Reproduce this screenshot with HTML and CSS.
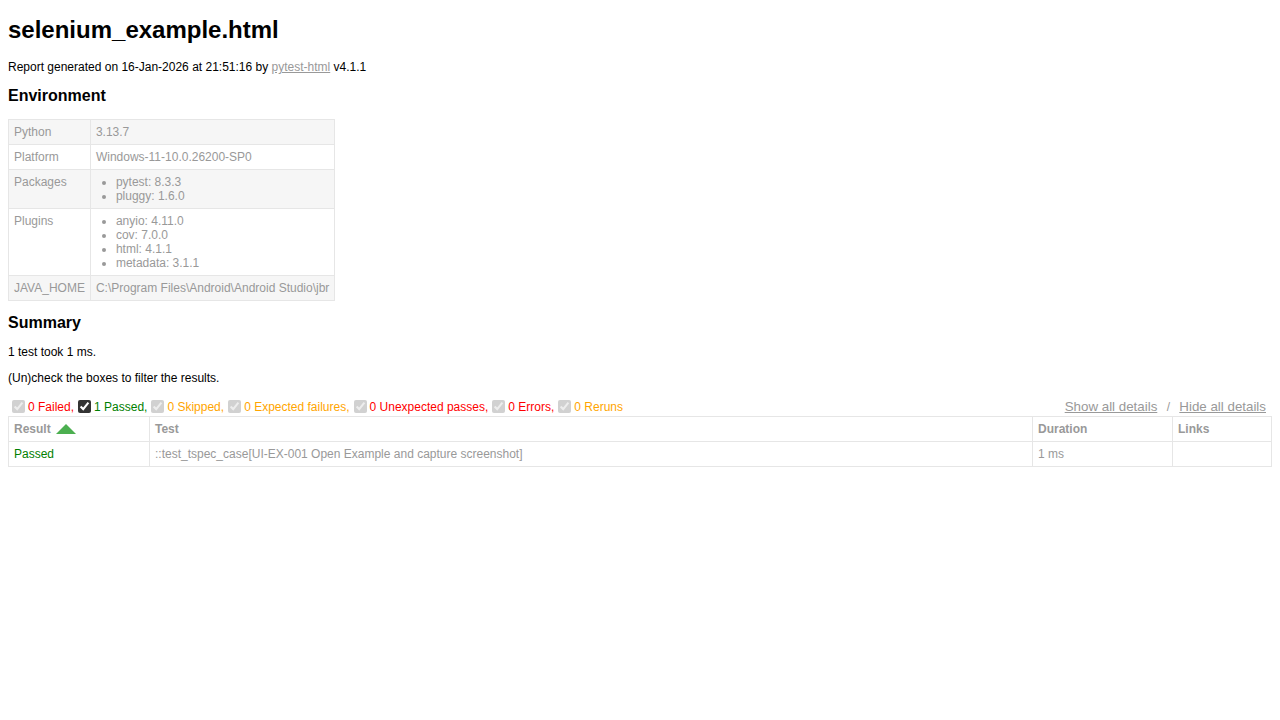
FILE: index.html
```html
<!DOCTYPE html>
<html lang="en">
<head>
    <meta charset="UTF-8">
    <title>selenium_example.html</title>
    <link rel="stylesheet" href="styles.css">
</head>
<body>
    <h1 id="title">selenium_example.html</h1>
    <p>Report generated on 16-Jan-2026 at 21:51:16 by <a href="#">pytest-html</a> v4.1.1</p>

    <div id="environment-header">
        <h2>Environment</h2>
    </div>
    <table id="environment">
        <tr>
            <td>Python</td>
            <td>3.13.7</td>
        </tr>
        <tr>
            <td>Platform</td>
            <td>Windows-11-10.0.26200-SP0</td>
        </tr>
        <tr>
            <td>Packages</td>
            <td>
                <ul>
                    <li>pytest: 8.3.3</li>
                    <li>pluggy: 1.6.0</li>
                </ul>
            </td>
        </tr>
        <tr>
            <td>Plugins</td>
            <td>
                <ul>
                    <li>anyio: 4.11.0</li>
                    <li>cov: 7.0.0</li>
                    <li>html: 4.1.1</li>
                    <li>metadata: 3.1.1</li>
                </ul>
            </td>
        </tr>
        <tr>
            <td>JAVA_HOME</td>
            <td>C:\Program Files\Android\Android Studio\jbr</td>
        </tr>
    </table>

    <div class="summary">
        <h2>Summary</h2>
        <p class="run-count">1 test took 1 ms.</p>
        <p class="filter">(Un)check the boxes to filter the results.</p>
        <div class="controls">
            <div class="filters"><input type="checkbox" checked disabled><span class="failed">0 Failed,</span> <input type="checkbox" class="active" checked><span class="passed">1 Passed,</span> <input type="checkbox" checked disabled><span class="skipped">0 Skipped,</span> <input type="checkbox" checked disabled><span class="xfailed">0 Expected failures,</span> <input type="checkbox" checked disabled><span class="xpassed">0 Unexpected passes,</span> <input type="checkbox" checked disabled><span class="error">0 Errors,</span> <input type="checkbox" checked disabled><span class="rerun">0 Reruns</span></div>
            <div class="collapse">
                <button id="show_all_details">Show all details</button>&nbsp;/&nbsp;<button id="hide_all_details">Hide all details</button>
            </div>
        </div>
    </div>

    <table id="results-table">
        <thead>
            <tr>
                <th class="sortable asc col-result">Result</th>
                <th class="col-testId">Test</th>
                <th class="col-duration">Duration</th>
                <th class="col-links">Links</th>
            </tr>
        </thead>
        <tbody>
            <tr>
                <td class="passed">Passed</td>
                <td>::test_tspec_case[UI-EX-001 Open Example and capture screenshot]</td>
                <td>1 ms</td>
                <td></td>
            </tr>
        </tbody>
    </table>
</body>
</html>
```

FILE: styles.css
```css
body {
    margin: 0 8px 8px;
    font-family: "Liberation Sans", Helvetica, Arial, sans-serif;
    font-size: 12px;
    min-width: 800px;
    color: #999;
}

h1 {
    font-size: 24px;
    color: black;
}

h2 {
    font-size: 16px;
    color: black;
}

p {
    color: black;
}

a {
    color: #999;
}

table {
    border-collapse: collapse;
}

/* Environment */
#environment td {
    padding: 5px;
    border: 1px solid #e6e6e6;
    vertical-align: top;
}

#environment tr:nth-child(odd) {
    background-color: #f6f6f6;
}

#environment ul {
    margin: 0;
    padding: 0 20px;
}

/* Summary */
.passed {
    color: green;
}

.failed,
.error,
.xpassed {
    color: red;
}

.skipped,
.xfailed,
.rerun {
    color: orange;
}

.controls {
    display: flex;
    justify-content: space-between;
    align-items: center;
    margin-top: 13px;
}

.filters {
    font-size: 0;
}

.filters span {
    font-size: 12px;
    vertical-align: middle;
}

.filters input {
    vertical-align: middle;
    margin: 0 3px 0 4px;
}

.filters span + input {
    margin-left: 4px;
}

.filters input.active {
    accent-color: #333;
}

.collapse button {
    color: #999;
    border: none;
    background: none;
    padding: 1px 6px;
    font-family: "Liberation Sans", Arial, sans-serif;
    font-size: 13.33px;
    text-decoration: underline;
    cursor: pointer;
}

/* Results */
#results-table {
    border: 1px solid #e6e6e6;
    color: #999;
    font-size: 12px;
    width: 100%;
    margin-top: 1px;
}

#results-table th,
#results-table td {
    padding: 5px;
    border: 1px solid #e6e6e6;
    text-align: left;
}

#results-table th {
    font-weight: bold;
}

#results-table td.passed {
    color: green;
}

.col-result {
    width: 130px;
}

.col-duration {
    width: 129px;
}

.col-links {
    width: 88px;
}

.sortable.asc:after {
    content: " ";
    position: relative;
    left: 5px;
    top: -12px;
    border: 10px solid #4caf50;
    border-top: 0;
    border-left-color: transparent;
    border-right-color: transparent;
}
```
